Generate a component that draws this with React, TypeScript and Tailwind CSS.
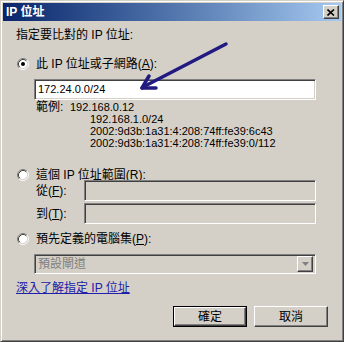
import React from "react"

const FONT = { fontFamily: '"Liberation Sans", "Noto Sans CJK TC", sans-serif' }

function Radio({ checked }: { checked?: boolean }) {
  return (
    <svg width="12" height="12" viewBox="0 0 12 12" className="shrink-0">
      <circle cx="6" cy="6" r="4.5" fill="#ffffff" />
      <path d="M2.11 9.89 A5.5 5.5 0 0 1 9.89 2.11" fill="none" stroke="#808080" />
      <path d="M9.89 2.11 A5.5 5.5 0 0 1 2.11 9.89" fill="none" stroke="#ffffff" />
      <path d="M2.82 9.18 A4.5 4.5 0 0 1 9.18 2.82" fill="none" stroke="#404040" />
      <path d="M9.18 2.82 A4.5 4.5 0 0 1 2.82 9.18" fill="none" stroke="#d4d0c8" />
      {checked && <circle cx="6" cy="6" r="2" fill="#000000" />}
    </svg>
  )
}

const sunken =
  "border border-t-[#808080] border-l-[#808080] border-b-white border-r-white shadow-[inset_1px_1px_0_#404040,inset_-1px_-1px_0_#d4d0c8]"

const raised =
  "border border-t-white border-l-white border-b-[#404040] border-r-[#404040] shadow-[inset_-1px_-1px_0_#808080]"

function Mn({ c }: { c: string }) {
  return (
    <>
      (<span className="underline">{c}</span>):
    </>
  )
}

export default function App() {
  return (
    <div
      className="w-[344px] h-[342px] bg-[#d4d0c8] border border-t-[#d4d0c8] border-l-[#d4d0c8] border-b-[#404040] border-r-[#404040] shadow-[inset_1px_1px_0_#ffffff,inset_-1px_-1px_0_#808080] p-[2px] flex flex-col text-black"
      style={FONT}
    >
      {/* Title bar */}
      <div className="h-[18px] shrink-0 flex items-center justify-between pl-[3px] pr-[2px] bg-gradient-to-r from-[#0a246a] to-[#a6caf0]">
        <span className="text-white font-bold text-[12px] leading-none">IP 位址</span>
        <div className={`w-4 h-[14px] bg-[#d4d0c8] flex items-center justify-center ${raised}`}>
          <svg width="8" height="7" viewBox="0 0 8 7">
            <path d="M0.5 0.5 L7 6.5 M7 0.5 L0.5 6.5" stroke="#000" strokeWidth="1.6" />
          </svg>
        </div>
      </div>

      {/* Body */}
      <div className="relative flex-1 flex flex-col pl-[13px] pr-[25px] text-[12px]">
        <div className="mt-[7px] h-[14px] flex items-center leading-none">指定要比對的 IP 位址:</div>

        <div className="mt-[15px] h-[14px] flex items-center gap-[7px] pl-px leading-none">
          <Radio checked />
          <span>此 IP 位址或子網路<Mn c="A" /></span>
        </div>

        <div className={`mt-[8px] ml-[18px] h-[21px] bg-white flex items-center px-[3px] text-[11px] ${sunken}`}>
          172.24.0.0/24
        </div>

        <div className="mt-[1px] ml-[20px] flex flex-col text-[11px] leading-[12px]">
          <div className="h-[12px] flex items-center">
            <span className="w-[34px] text-[12px]">範例:</span>
            <span>192.168.0.12</span>
          </div>
          <div className="h-[12px] pl-[54px]">192.168.1.0/24</div>
          <div className="h-[12px] pl-[54px]">2002:9d3b:1a31:4:208:74ff:fe39:6c43</div>
          <div className="h-[12px] pl-[54px]">2002:9d3b:1a31:4:208:74ff:fe39:0/112</div>
        </div>

        <div className="mt-[20px] h-[11px] flex items-center gap-[7px] pl-px leading-none">
          <Radio />
          <span>這個 IP 位址範圍<Mn c="R" /></span>
        </div>

        <div className="ml-[20px] h-[21px] flex items-center">
          <span className="w-[48px]">從<Mn c="F" /></span>
          <div className={`flex-1 h-full bg-[#d4d0c8] ${sunken}`} />
        </div>
        <div className="mt-[2px] ml-[20px] h-[21px] flex items-center">
          <span className="w-[48px]">到<Mn c="T" /></span>
          <div className={`flex-1 h-full bg-[#d4d0c8] ${sunken}`} />
        </div>

        <div className="mt-[9px] h-[12px] flex items-center gap-[7px] pl-px leading-none">
          <Radio />
          <span>預先定義的電腦集<Mn c="P" /></span>
        </div>

        <div className={`mt-[9px] ml-[18px] h-[20px] bg-[#d4d0c8] flex items-center justify-between pl-[3px] pr-[2px] ${sunken}`}>
          <span className="text-[#808080]">預設閘道</span>
          <div className={`w-[16px] h-[16px] bg-[#d4d0c8] flex items-center justify-center ${raised}`}>
            <svg width="7" height="4" viewBox="0 0 7 4">
              <path d="M0 0 H7 L3.5 4 Z" fill="#808080" />
            </svg>
          </div>
        </div>

        <div className="mt-[7px] h-[14px] flex items-center">
          <span className="text-[#2020a8] underline leading-none">深入了解指定 IP 位址</span>
        </div>

        <div className="mt-[11px] flex justify-end gap-[7px] -mr-[12px]">
          <div className="w-[74px] h-[21px] border border-black">
            <div className={`w-full h-full bg-[#d4d0c8] flex items-center justify-center ${raised}`}>確定</div>
          </div>
          <div className={`w-[74px] h-[21px] bg-[#d4d0c8] flex items-center justify-center ${raised}`}>取消</div>
        </div>

        {/* Annotation arrow */}
        <svg className="absolute pointer-events-none" width="338" height="318" style={{ left: -3, top: -21 }}>
          <g stroke="#211a80" strokeWidth="3.5" strokeLinecap="round" fill="none">
            <path d="M226 44 L143 87" />
            <path d="M142 88 L149 76" />
            <path d="M142 88 L156 88" />
          </g>
        </svg>
      </div>
    </div>
  )
}
